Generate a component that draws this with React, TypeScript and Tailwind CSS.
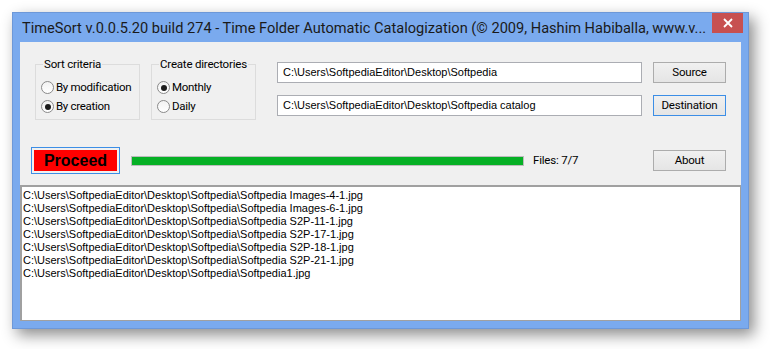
import React from "react";

const files = [
  "C:\\Users\\SoftpediaEditor\\Desktop\\Softpedia\\Softpedia Images-4-1.jpg",
  "C:\\Users\\SoftpediaEditor\\Desktop\\Softpedia\\Softpedia Images-6-1.jpg",
  "C:\\Users\\SoftpediaEditor\\Desktop\\Softpedia\\Softpedia S2P-11-1.jpg",
  "C:\\Users\\SoftpediaEditor\\Desktop\\Softpedia\\Softpedia S2P-17-1.jpg",
  "C:\\Users\\SoftpediaEditor\\Desktop\\Softpedia\\Softpedia S2P-18-1.jpg",
  "C:\\Users\\SoftpediaEditor\\Desktop\\Softpedia\\Softpedia S2P-21-1.jpg",
  "C:\\Users\\SoftpediaEditor\\Desktop\\Softpedia\\Softpedia1.jpg",
];

const ui = { fontFamily: 'Roboto, "Noto Sans", sans-serif' };
const mono = { fontFamily: '"Liberation Sans", Arial, sans-serif' };

function Radio({ checked, label }: { checked: boolean; label: string }) {
  return (
    <div className="flex items-center h-[13px]">
      <div className="w-[13px] h-[13px] rounded-full border border-[#8a8a8a] bg-gradient-to-b from-[#f2f2f2] to-[#ffffff] flex items-center justify-center shrink-0">
        {checked && <div className="w-[6px] h-[6px] rounded-full bg-[#1c1c1c]" />}
      </div>
      <span className="ml-[2px] text-[11.5px] tracking-[-0.3px] leading-none text-black whitespace-nowrap">
        {label}
      </span>
    </div>
  );
}

function Group({ title, items }: { title: string; items: [string, boolean][] }) {
  return (
    <div className="relative w-[105px] h-[56px] border border-[#dcdcdc] mt-[2px]">
      <div className="absolute left-[7px] top-[-8px] px-[1px] bg-[#f0f0f0] text-[11.5px] tracking-[-0.2px] leading-[14px] text-black whitespace-nowrap">
        {title}
      </div>
      <div className="flex flex-col gap-[6px] pl-[5px] pt-[16px]">
        {items.map(([l, c]) => (
          <Radio key={l} label={l} checked={c} />
        ))}
      </div>
    </div>
  );
}

function Btn({ children, focus }: { children: React.ReactNode; focus?: boolean }) {
  return (
    <div
      className={`w-[73px] h-[21px] flex items-center justify-center text-[11.5px] tracking-[-0.2px] text-black bg-gradient-to-b from-[#f0f0f0] to-[#e5e5e5] border ${
        focus ? "border-[#3c8ee6]" : "border-[#acacac]"
      }`}
    >
      {children}
    </div>
  );
}

function Field({ value }: { value: string }) {
  return (
    <div
      className="w-[365px] h-[21px] bg-white border border-[#abadb3] flex items-center pl-[5px] text-[11px] text-black whitespace-nowrap"
      style={mono}
    >
      {value}
    </div>
  );
}

export default function App() {
  return (
    <div className="w-[770px] h-[349px] bg-white pt-[12px] pl-[12px] overflow-hidden" style={ui}>
      <div className="w-[737px] h-[317px] bg-[#7aaaee] border border-[#6d98d8] flex flex-col shadow-[5px_6px_14px_rgba(0,0,0,0.45)]">
        <div className="h-[29px] flex items-start justify-between shrink-0">
          <div className="pl-[9px] pt-[5px] text-[14.6px] leading-[20px] text-[#1a1a1a] whitespace-nowrap overflow-hidden">
            TimeSort v.0.0.5.20 build 274 - Time Folder Automatic Catalogization (© 2009, Hashim Habiballa, www.v...
          </div>
          <div className="w-[31px] h-[20px] mr-[5px] bg-[#c75050] flex items-center justify-center shrink-0">
            <svg width="10" height="10" viewBox="0 0 10 10">
              <path d="M1 1 L9 9 M9 1 L1 9" stroke="white" strokeWidth="1.8" />
            </svg>
          </div>
        </div>
        <div className="flex-1 mx-[7px] mb-[7px] bg-[#f0f0f0] flex flex-col">
          <div className="h-[143px] shrink-0 flex flex-col">
            <div className="flex pt-[20px] pl-[15px]">
              <Group
                title="Sort criteria"
                items={[
                  ["By modification", false],
                  ["By creation", true],
                ]}
              />
              <div className="ml-[11px]">
                <Group
                  title="Create directories"
                  items={[
                    ["Monthly", true],
                    ["Daily", false],
                  ]}
                />
              </div>
              <div className="ml-[21px] flex flex-col gap-[12px]">
                <Field value="C:\Users\SoftpediaEditor\Desktop\Softpedia" />
                <Field value="C:\Users\SoftpediaEditor\Desktop\Softpedia catalog" />
              </div>
              <div className="ml-[11px] flex flex-col gap-[12px]">
                <Btn>Source</Btn>
                <Btn focus>Destination</Btn>
              </div>
            </div>
            <div className="flex items-center mt-[27px] pl-[11px] h-[27px]">
              <div className="w-[89px] h-[27px] border border-[#3c8ee6] p-[2px]">
                <div
                  className="w-full h-full bg-[#ff0000] flex items-center justify-center text-[16px] font-bold text-black"
                  style={mono}
                >
                  Proceed
                </div>
              </div>
              <div className="ml-[11px] w-[393px] h-[10px] border border-[#bcbcbc] bg-[#06b025]" />
              <div className="ml-[9px] w-[120px] text-[11.5px] tracking-[-0.2px] text-black">Files: 7/7</div>
              <Btn>About</Btn>
            </div>
          </div>
          <div
            className="flex-1 bg-white border-t-2 border-l-2 border-b border-r border-[#a0a0a0] pl-[1px] pt-[2px]"
            style={mono}
          >
            {files.map((f) => (
              <div key={f} className="text-[11px] leading-[13px] text-black whitespace-nowrap">
                {f}
              </div>
            ))}
          </div>
        </div>
      </div>
    </div>
  );
}
